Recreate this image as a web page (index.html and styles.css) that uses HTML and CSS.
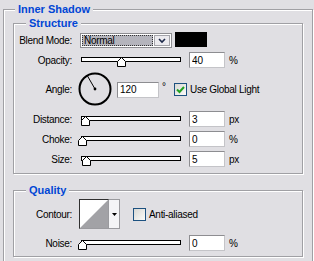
FILE: index.html
```html
<!DOCTYPE html>
<html lang="en">
<head>
    <meta charset="UTF-8">
    <title>Inner Shadow</title>
    <link rel="stylesheet" href="styles.css">
</head>
<body>
    <fieldset class="group outer">
        <legend>Inner Shadow</legend>

        <fieldset class="group structure">
            <legend>Structure</legend>
            <div class="rows">
                <label class="lbl">Blend Mode:</label>
                <div class="ctl">
                    <div class="select">
                        <span class="sel-val"><span class="focus">Normal</span></span>
                        <span class="sel-btn">
                            <svg width="8" height="6" viewBox="0 0 8 6"><polyline points="1,1 4,4 7,1" fill="none" stroke="#1d2a4a" stroke-width="1.6"/></svg>
                        </span>
                    </div>
                    <span class="swatch"></span>
                </div>

                <label class="lbl">Opacity:</label>
                <div class="ctl">
                    <div class="slider">
                        <div class="track"></div>
                        <svg class="thumb" style="left:36px" viewBox="0 0 9 10"><polygon points="4.5,0.5 8.5,4.5 8.5,9.5 0.5,9.5 0.5,4.5" fill="#fff" stroke="#000"/></svg>
                    </div>
                    <input class="num" type="text" value="40">
                    <span class="unit">%</span>
                </div>

                <label class="lbl">Angle:</label>
                <div class="ctl">
                    <svg class="dial" width="34" height="35" viewBox="0 0 34 35">
                        <circle cx="17" cy="17" r="15.5" fill="none" stroke="#000" stroke-width="2"/>
                        <line x1="17" y1="17" x2="9.5" y2="4" stroke="#000"/>
                        <circle cx="17" cy="17" r="1.4" fill="#000"/>
                    </svg>
                    <input class="num wide" type="text" value="120">
                    <span class="deg">°</span>
                    <span class="check on">
                        <svg width="9" height="8" viewBox="0 0 9 8"><polyline points="1,3.5 3.5,6 8,1" fill="none" stroke="#21a121" stroke-width="2"/></svg>
                    </span>
                    <span class="check-text">Use Global Light</span>
                </div>

                <label class="lbl">Distance:</label>
                <div class="ctl">
                    <div class="slider">
                        <div class="track"></div>
                        <svg class="thumb" style="left:0px" viewBox="0 0 9 10"><polygon points="4.5,0.5 8.5,4.5 8.5,9.5 0.5,9.5 0.5,4.5" fill="#fff" stroke="#000"/></svg>
                    </div>
                    <input class="num" type="text" value="3">
                    <span class="unit">px</span>
                </div>

                <label class="lbl">Choke:</label>
                <div class="ctl">
                    <div class="slider">
                        <div class="track"></div>
                        <svg class="thumb" style="left:-3px" viewBox="0 0 9 10"><polygon points="4.5,0.5 8.5,4.5 8.5,9.5 0.5,9.5 0.5,4.5" fill="#fff" stroke="#000"/></svg>
                    </div>
                    <input class="num" type="text" value="0">
                    <span class="unit">%</span>
                </div>

                <label class="lbl">Size:</label>
                <div class="ctl">
                    <div class="slider">
                        <div class="track"></div>
                        <svg class="thumb" style="left:1px" viewBox="0 0 9 10"><polygon points="4.5,0.5 8.5,4.5 8.5,9.5 0.5,9.5 0.5,4.5" fill="#fff" stroke="#000"/></svg>
                    </div>
                    <input class="num" type="text" value="5">
                    <span class="unit">px</span>
                </div>
            </div>
        </fieldset>

        <fieldset class="group quality">
            <legend>Quality</legend>
            <div class="rows">
                <label class="lbl">Contour:</label>
                <div class="ctl">
                    <span class="contour">
                        <svg width="28" height="28" viewBox="0 0 28 28"><rect width="28" height="28" fill="#fff"/><polygon points="28,0 28,28 0,28" fill="#a2a2a6"/></svg>
                    </span>
                    <span class="contour-btn">
                        <svg width="5" height="3" viewBox="0 0 5 3"><polygon points="0,0 5,0 2.5,3" fill="#000"/></svg>
                    </span>
                    <span class="check"></span>
                    <span class="check-text">Anti-aliased</span>
                </div>

                <label class="lbl">Noise:</label>
                <div class="ctl">
                    <div class="slider">
                        <div class="track"></div>
                        <svg class="thumb" style="left:-3px" viewBox="0 0 9 10"><polygon points="4.5,0.5 8.5,4.5 8.5,9.5 0.5,9.5 0.5,4.5" fill="#fff" stroke="#000"/></svg>
                    </div>
                    <input class="num" type="text" value="0">
                    <span class="unit">%</span>
                </div>
            </div>
        </fieldset>
    </fieldset>
</body>
</html>
```

FILE: styles.css
```css
html, body {
    margin: 0;
    overflow: hidden;
}
body {
    width: 314px;
    height: 261px;
    background: #e0dfe3;
    font: 10px "Liberation Sans", Arial, sans-serif;
    letter-spacing: -0.3px;
    color: #000;
}
.group {
    box-sizing: border-box;
    min-inline-size: 0;
    margin: 0 9px;
    padding: 0;
    border: 1px solid #a0a0a4;
    box-shadow: inset 1px 1px 0 #fff, 1px 1px 0 #fff;
}
.group legend {
    margin-left: 12px;
    padding: 0 3px;
    background: #e0dfe3;
    font-size: 11px;
    font-weight: bold;
    line-height: 13px;
    letter-spacing: 0;
    color: #0046d5;
}
.outer {
    width: 310px;
    margin: 3px 0 0 3px;
    padding: 0 0 8px;
}
.outer > legend {
    margin-left: 11px;
}
.structure {
    margin-top: 1px;
    padding: 3px 0 6px;
}
.quality {
    margin-top: 10px;
    padding: 2px 0 5px;
}
.rows {
    display: grid;
    grid-template-columns: 59px 1fr;
    row-gap: 4px;
    align-items: center;
}
.structure .rows {
    grid-template-rows: 15px 16px 35px 16px 16px 16px;
}
.quality .rows {
    grid-template-rows: 30px 16px;
    row-gap: 6px;
}
.lbl {
    text-align: right;
    padding-right: 1px;
    white-space: nowrap;
}
.ctl {
    display: flex;
    align-items: center;
    height: 100%;
}

/* blend mode dropdown */
.select {
    display: flex;
    gap: 1px;
    box-sizing: border-box;
    width: 92px;
    height: 15px;
    margin-left: 7px;
    padding: 1px;
    border: 1px solid #8d8d91;
    background: #fff;
}
.sel-val {
    flex: 1;
    display: flex;
    align-items: center;
    background: #b4b4bc;
}
.focus {
    flex: 1;
    box-sizing: border-box;
    height: 100%;
    padding-left: 1px;
    border: 1px dotted #333;
    line-height: 9px;
}
.sel-btn {
    display: flex;
    align-items: center;
    justify-content: center;
    box-sizing: border-box;
    width: 16px;
    border: 1px solid #a4a4aa;
    background: #ecebef;
}
.swatch {
    width: 32px;
    height: 15px;
    margin: -2px 0 0 3px;
    background: #000;
}

/* sliders */
.slider {
    position: relative;
    width: 100px;
    height: 16px;
    margin-left: 8px;
}
.track {
    box-sizing: border-box;
    height: 5px;
    margin-top: 5px;
    border: 1px solid #000;
    background: #fff;
}
.thumb {
    position: absolute;
    top: 5px;
    width: 9px;
    height: 10px;
}
.num {
    box-sizing: border-box;
    width: 36px;
    height: 16px;
    margin: 0 0 0 8px;
    padding: 0 2px;
    border: 1px solid;
    border-color: #8d8d91 #c4c4c8 #c4c4c8 #8d8d91;
    background: #fff;
    font: inherit;
    letter-spacing: 0;
    color: #000;
    outline: none;
}
.unit {
    margin-left: 4px;
}

/* angle */
.dial {
    margin-left: 5px;
}
.num.wide {
    width: 42px;
    margin-left: 5px;
}
.deg {
    align-self: flex-start;
    width: 12px;
    margin-top: 9px;
    padding-left: 3px;
}
.check {
    display: flex;
    align-items: center;
    justify-content: center;
    box-sizing: border-box;
    width: 13px;
    height: 13px;
    border: 1px solid #1c5180;
    background: linear-gradient(135deg, #d8d8d4, #fbfbf9);
}
.check-text {
    margin-left: 3px;
}

/* contour */
.contour {
    display: flex;
    margin-left: 6px;
    border: 1px solid;
    border-color: #303030 #9a9a9e #9a9a9e #303030;
}
.contour-btn {
    display: flex;
    align-items: center;
    justify-content: center;
    box-sizing: border-box;
    width: 11px;
    height: 30px;
    border: 1px solid #9a9a9e;
    border-left: 0;
    background: #f4f4f6;
}
.contour-btn + .check {
    margin-left: 13px;
}
```
